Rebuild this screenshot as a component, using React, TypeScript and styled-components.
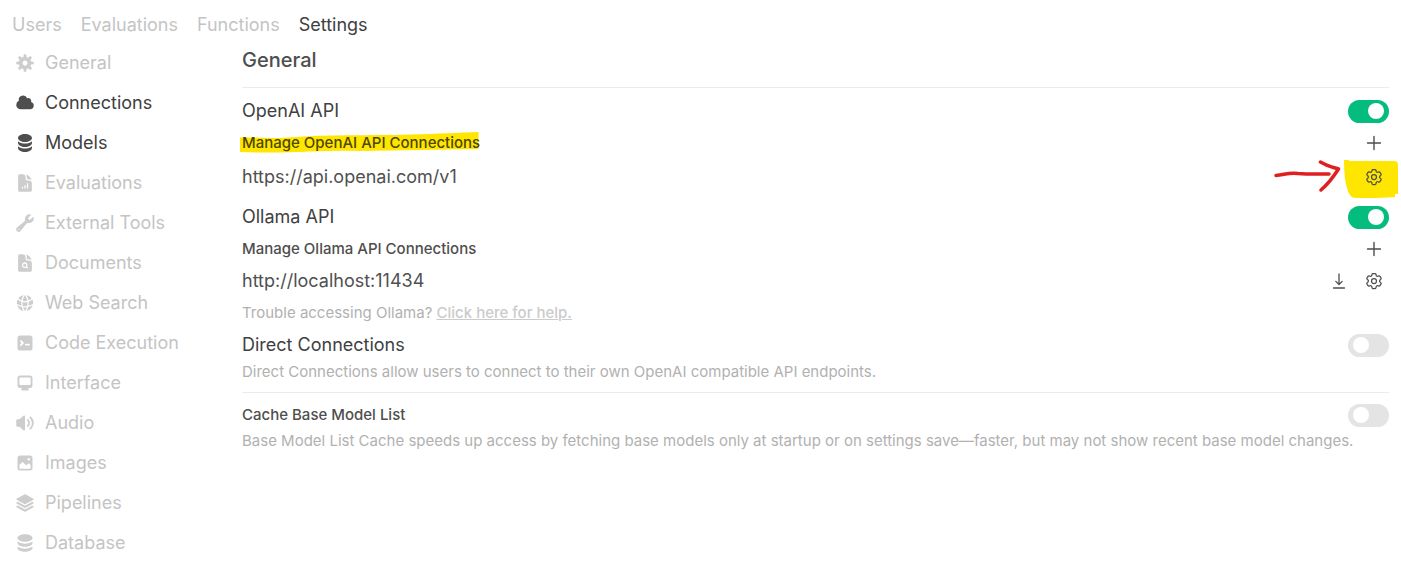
import React from "react";
import styled, { createGlobalStyle } from "styled-components";
import {
  HiDocumentChartBar,
  HiDocumentMagnifyingGlass,
  HiGlobeAlt,
  HiOutlineCog6Tooth,
} from "react-icons/hi2";

const GlobalStyle = createGlobalStyle`
  *, *::before, *::after { box-sizing: border-box; }
  body {
    margin: 0;
    background: #fff;
    color: #4e4e4e;
    font-family: Inter, "Liberation Sans", sans-serif;
  }
`;

const Page = styled.div`
  padding: 8px 12px;
`;

const Tabs = styled.nav`
  display: flex;
  gap: 19px;
  height: 34px;
  align-items: center;
  margin-bottom: 1px;
`;

const NavLink = styled.a<{ $active?: boolean }>`
  color: ${(p) => (p.$active ? "#404040" : "#c4c4c4")};
  font-size: 18px;
  font-weight: 400;
  line-height: 24px;
  text-decoration: none;
  white-space: nowrap;
`;

const Columns = styled.div`
  display: flex;
  align-items: flex-start;
`;

const Sidebar = styled.nav`
  flex: 0 0 230px;
  display: flex;
  flex-direction: column;
`;

const SideLink = styled(NavLink)`
  display: flex;
  align-items: center;
  gap: 10px;
  height: 40px;
  padding-left: 3px;

  svg {
    width: 20px;
    height: 20px;
    flex: none;
    color: ${(p) => (p.$active ? "#4e4e4e" : "#cdcdcd")};
  }
`;

const Main = styled.main`
  flex: 1;
  min-width: 0;
  padding-top: 5px;
`;

const Title = styled.h1`
  margin: 0;
  padding-bottom: 15px;
  font-size: 20px;
  line-height: 24px;
  font-weight: 500;
`;

const Divider = styled.hr`
  height: 1px;
  margin: 0 0 8px;
  border: 0;
  background: #ebebeb;
`;

const Section = styled.section<{ $tight?: boolean }>`
  padding-bottom: ${(p) => (p.$tight ? 5 : 8)}px;
`;

const rowHeights = { short: 28, normal: 30, tall: 34 };

const Row = styled.div<{ $size?: keyof typeof rowHeights }>`
  display: flex;
  align-items: center;
  justify-content: space-between;
  height: ${(p) => rowHeights[p.$size ?? "normal"]}px;
`;

const Label = styled.label<{ $small?: boolean }>`
  color: ${(p) => (p.$small ? "#4e4e4e" : "#404040")};
  font-size: ${(p) => (p.$small ? 15 : 18)}px;
  font-weight: ${(p) => (p.$small ? 500 : 400)};
  line-height: 24px;
`;

const Subheading = styled.h2`
  position: relative;
  margin: 0;
  font-size: 15px;
  font-weight: 500;
  line-height: 24px;

  span {
    position: relative;
    color: #4e4700;
  }
`;

const UrlInput = styled.input`
  flex: 1;
  min-width: 0;
  padding: 0;
  border: 0;
  outline: 0;
  background: none;
  color: #505050;
  font: 400 18px/24px Inter, "Liberation Sans", sans-serif;
`;

const Note = styled.p<{ $spaced?: boolean }>`
  margin: ${(p) => (p.$spaced ? 5 : 0)}px 0 0;
  color: #b1b1b1;
  font-size: 15px;
  line-height: 24px;

  a {
    color: #cbcbcb;
    font-weight: 500;
    text-decoration: underline;
  }
`;

const Actions = styled.div`
  display: flex;
  gap: 5px;
`;

const IconButton = styled.button`
  position: relative;
  display: flex;
  align-items: center;
  justify-content: center;
  width: 30px;
  height: 28px;
  padding: 0;
  border: 0;
  background: none;
  color: #4e4e4e;

  > svg:last-child { position: relative; }
`;

const Toggle = styled.input`
  appearance: none;
  flex: none;
  display: flex;
  align-items: center;
  width: 41px;
  height: 23px;
  margin: 0;
  padding: 0 5px;
  border-radius: 12px;
  background: #e4e4e4;

  &::before {
    content: "";
    width: 16px;
    height: 16px;
    border-radius: 50%;
    background: #fff;
  }

  &:checked {
    justify-content: flex-end;
    background: #04bc7d;
  }
`;

const TextMarker = styled.svg`
  position: absolute;
  left: -2px;
  top: 0;
`;

const ButtonMarker = styled.svg`
  position: absolute;
  right: -11px;
  top: -3px;
`;

const Solid = ({ paths, box = 16 }: { paths: string[]; box?: number }) => (
  <svg viewBox={`0 0 ${box} ${box}`} fill="currentColor" fillRule="evenodd" clipRule="evenodd" aria-hidden="true">
    {paths.map((d) => (
      <path key={d} d={d} />
    ))}
  </svg>
);

const PlusIcon = () => (
  <svg width="20" height="20" viewBox="0 0 20 20" stroke="currentColor" strokeWidth="1.4" strokeLinecap="round" aria-hidden="true">
    <path d="M10 3.5v13M3.5 10h13" />
  </svg>
);

const DownloadIcon = () => (
  <svg width="20" height="20" viewBox="0 0 20 20" fill="none" stroke="currentColor" strokeWidth="1.3" strokeLinecap="round" strokeLinejoin="round" aria-hidden="true">
    <path d="M10 3v10.5M6.8 10.4l3.2 3.1 3.2-3.1M4.5 17h11" />
  </svg>
);

const items: { name: string; active?: boolean; icon: React.ReactNode }[] = [
  {
    name: "General",
    icon: <Solid paths={["M6.955 1.45A.5.5 0 0 1 7.452 1h1.096a.5.5 0 0 1 .497.45l.17 1.699c.484.12.94.312 1.356.562l1.321-1.081a.5.5 0 0 1 .67.033l.774.775a.5.5 0 0 1 .034.67l-1.08 1.32c.25.417.44.873.561 1.357l1.699.17a.5.5 0 0 1 .45.497v1.096a.5.5 0 0 1-.45.497l-1.699.17c-.12.484-.312.94-.562 1.356l1.082 1.322a.5.5 0 0 1-.034.67l-.774.774a.5.5 0 0 1-.67.033l-1.322-1.08c-.416.25-.872.44-1.356.561l-.17 1.699a.5.5 0 0 1-.497.45H7.452a.5.5 0 0 1-.497-.45l-.17-1.699a4.973 4.973 0 0 1-1.356-.562L4.108 13.37a.5.5 0 0 1-.67-.033l-.774-.775a.5.5 0 0 1-.034-.67l1.08-1.32a4.971 4.971 0 0 1-.561-1.357l-1.699-.17A.5.5 0 0 1 1 8.548V7.452a.5.5 0 0 1 .45-.497l1.699-.17c.12-.484.312-.94.562-1.356L2.629 4.107a.5.5 0 0 1 .034-.67l.774-.774a.5.5 0 0 1 .67-.033L5.43 3.71a4.97 4.97 0 0 1 1.356-.561l.17-1.699ZM6 8c0 .538.212 1.026.558 1.385l.057.057a2 2 0 0 0 2.828-2.828l-.058-.056A2 2 0 0 0 6 8Z"]} />,
  },
  {
    name: "Connections",
    active: true,
    icon: <Solid paths={["M1 9.5A3.5 3.5 0 0 0 4.5 13H12a3 3 0 0 0 .917-5.857 2.503 2.503 0 0 0-3.198-3.019 3.5 3.5 0 0 0-6.628 2.171A3.5 3.5 0 0 0 1 9.5Z"]} />,
  },
  {
    name: "Models",
    active: true,
    icon: <Solid box={20} paths={["M10 1c3.866 0 7 1.79 7 4s-3.134 4-7 4-7-1.79-7-4 3.134-4 7-4zm5.694 8.13c.464-.264.91-.583 1.306-.952V10c0 2.21-3.134 4-7 4s-7-1.79-7-4V8.178c.396.37.842.688 1.306.953C5.838 10.006 7.854 10.5 10 10.5s4.162-.494 5.694-1.37zM3 13.179V15c0 2.21 3.134 4 7 4s7-1.79 7-4v-1.822c-.396.37-.842.688-1.306.953-1.532.875-3.548 1.369-5.694 1.369s-4.162-.494-5.694-1.37A7.009 7.009 0 013 13.179z"]} />,
  },
  { name: "Evaluations", icon: <HiDocumentChartBar aria-hidden="true" /> },
  {
    name: "External Tools",
    icon: <Solid paths={["M11.5 8a3.5 3.5 0 0 0 3.362-4.476c-.094-.325-.497-.39-.736-.15L12.099 5.4a.48.48 0 0 1-.653.033 8.554 8.554 0 0 1-.879-.879.48.48 0 0 1 .033-.653l2.027-2.028c.24-.239.175-.642-.15-.736a3.502 3.502 0 0 0-4.476 3.427c.018.99-.133 2.093-.914 2.7l-5.31 4.13a2.015 2.015 0 1 0 2.828 2.827l4.13-5.309c.607-.78 1.71-.932 2.7-.914L11.5 8ZM3 13.5a.5.5 0 1 0 0-1 .5.5 0 0 0 0 1Z"]} />,
  },
  { name: "Documents", icon: <HiDocumentMagnifyingGlass aria-hidden="true" /> },
  { name: "Web Search", icon: <HiGlobeAlt aria-hidden="true" /> },
  {
    name: "Code Execution",
    icon: <Solid paths={["M2 4a2 2 0 0 1 2-2h8a2 2 0 0 1 2 2v8a2 2 0 0 1-2 2H4a2 2 0 0 1-2-2V4Zm2.22 1.97a.75.75 0 0 0 0 1.06l.97.97-.97.97a.75.75 0 1 0 1.06 1.06l1.5-1.5a.75.75 0 0 0 0-1.06l-1.5-1.5a.75.75 0 0 0-1.06 0ZM8.75 8.5a.75.75 0 0 0 0 1.5h2.5a.75.75 0 0 0 0-1.5h-2.5Z"]} />,
  },
  {
    name: "Interface",
    icon: <Solid paths={["M2 4.25A2.25 2.25 0 0 1 4.25 2h7.5A2.25 2.25 0 0 1 14 4.25v5.5A2.25 2.25 0 0 1 11.75 12h-1.312c.1.128.21.248.328.36a.75.75 0 0 1 .234.545v.345a.75.75 0 0 1-.75.75h-4.5a.75.75 0 0 1-.75-.75v-.345a.75.75 0 0 1 .234-.545c.118-.111.228-.232.328-.36H4.25A2.25 2.25 0 0 1 2 9.75v-5.5Zm2.25-.75a.75.75 0 0 0-.75.75v4.5c0 .414.336.75.75.75h7.5a.75.75 0 0 0 .75-.75v-4.5a.75.75 0 0 0-.75-.75h-7.5Z"]} />,
  },
  {
    name: "Audio",
    icon: <Solid paths={["M7.557 2.066A.75.75 0 0 1 8 2.75v10.5a.75.75 0 0 1-1.248.56L3.59 11H2a1 1 0 0 1-1-1V6a1 1 0 0 1 1-1h1.59l3.162-2.81a.75.75 0 0 1 .805-.124ZM12.95 3.05a.75.75 0 1 0-1.06 1.06 5.5 5.5 0 0 1 0 7.78.75.75 0 1 0 1.06 1.06 7 7 0 0 0 0-9.9Z", "M10.828 5.172a.75.75 0 1 0-1.06 1.06 2.5 2.5 0 0 1 0 3.536.75.75 0 1 0 1.06 1.06 4 4 0 0 0 0-5.656Z"]} />,
  },
  {
    name: "Images",
    icon: <Solid paths={["M2 4a2 2 0 0 1 2-2h8a2 2 0 0 1 2 2v8a2 2 0 0 1-2 2H4a2 2 0 0 1-2-2V4Zm10.5 5.707a.5.5 0 0 0-.146-.353l-1-1a.5.5 0 0 0-.708 0L9.354 9.646a.5.5 0 0 1-.708 0L6.354 7.354a.5.5 0 0 0-.708 0l-2 2a.5.5 0 0 0-.146.353V12a.5.5 0 0 0 .5.5h8a.5.5 0 0 0 .5-.5V9.707ZM12 5a1 1 0 1 1-2 0 1 1 0 0 1 2 0Z"]} />,
  },
  {
    name: "Pipelines",
    icon: <Solid box={24} paths={["M11.644 1.59a.75.75 0 0 1 .712 0l9.75 5.25a.75.75 0 0 1 0 1.32l-9.75 5.25a.75.75 0 0 1-.712 0l-9.75-5.25a.75.75 0 0 1 0-1.32l9.75-5.25Z", "m3.265 10.602 7.668 4.129a2.25 2.25 0 0 0 2.134 0l7.668-4.13 1.37.739a.75.75 0 0 1 0 1.32l-9.75 5.25a.75.75 0 0 1-.71 0l-9.75-5.25a.75.75 0 0 1 0-1.32l1.37-.738Z", "m10.933 19.231-7.668-4.13-1.37.739a.75.75 0 0 0 0 1.32l9.75 5.25c.221.12.489.12.71 0l9.75-5.25a.75.75 0 0 0 0-1.32l-1.37-.738-7.668 4.13a2.25 2.25 0 0 1-2.134-.001Z"]} />,
  },
  {
    name: "Database",
    icon: <Solid paths={["M8 7c3.314 0 6-1.343 6-3s-2.686-3-6-3-6 1.343-6 3 2.686 3 6 3Z", "M8 8.5c1.84 0 3.579-.37 4.914-1.037A6.33 6.33 0 0 0 14 6.78V8c0 1.657-2.686 3-6 3S2 9.657 2 8V6.78c.346.273.72.5 1.087.683C4.42 8.131 6.16 8.5 8 8.5Z", "M8 12.5c1.84 0 3.579-.37 4.914-1.037.366-.183.74-.41 1.086-.684V12c0 1.657-2.686 3-6 3s-6-1.343-6-3v-1.22c.346.273.72.5 1.087.683C4.42 12.131 6.16 12.5 8 12.5Z"]} />,
  },
];

export default function App() {
  return (
    <Page>
      <GlobalStyle />
      <Tabs aria-label="Admin">
        {["Users", "Evaluations", "Functions", "Settings"].map((tab) => (
          <NavLink key={tab} href="#" $active={tab === "Settings"}>
            {tab}
          </NavLink>
        ))}
      </Tabs>
      <Columns>
        <Sidebar aria-label="Settings">
          {items.map((item) => (
            <SideLink key={item.name} href="#" $active={item.active}>
              {item.icon}
              {item.name}
            </SideLink>
          ))}
        </Sidebar>
        <Main>
          <Title>General</Title>
          <Divider />
          <Section>
            <Row>
              <Label htmlFor="openai">OpenAI API</Label>
              <Toggle id="openai" type="checkbox" defaultChecked />
            </Row>
            <Row $size="tall">
              <Subheading>
                <TextMarker width="240" height="24" viewBox="0 0 240 24" aria-hidden="true">
                  <path d="M0 6.5C18 6 30 8 48 6.500C90 3 130 5 170 3.500C200 3 220 1.500 238.500 1V18C200 19 160 19 120 20C80 19 50 23 0 21Z" fill="#ffe600" />
                </TextMarker>
                <span>Manage OpenAI API Connections</span>
              </Subheading>
              <IconButton aria-label="Add OpenAI connection">
                <PlusIcon />
              </IconButton>
            </Row>
            <Row $size="tall">
              <UrlInput aria-label="OpenAI API URL" defaultValue="https://api.openai.com/v1" />
              <IconButton aria-label="Configure OpenAI connection">
                <ButtonMarker width="128" height="40" viewBox="0 0 128 40" aria-hidden="true">
                  <path d="M72 0h5v1h45q4 0 4 4v29h-3v3q-14 1-24 1H84q-7 0-9-10Q72 19 72 0Z" fill="#ffe600" />
                  <path d="M4 15.500C12 15 17 12 26 13.500C38 14.500 48 14 57 14M48.500 2C55 6 62 7.500 66.500 9C62 16 56 24 49 30" fill="none" stroke="#e02020" strokeWidth="3.5" strokeLinecap="round" strokeLinejoin="round" />
                </ButtonMarker>
                <HiOutlineCog6Tooth size={20} aria-hidden="true" />
              </IconButton>
            </Row>
          </Section>
          <Section $tight>
            <Row>
              <Label htmlFor="ollama">Ollama API</Label>
              <Toggle id="ollama" type="checkbox" defaultChecked />
            </Row>
            <Row $size="tall">
              <Subheading>Manage Ollama API Connections</Subheading>
              <IconButton aria-label="Add Ollama connection">
                <PlusIcon />
              </IconButton>
            </Row>
            <Row>
              <UrlInput aria-label="Ollama API URL" defaultValue="http://localhost:11434" />
              <Actions>
                <IconButton aria-label="Manage Ollama models">
                  <DownloadIcon />
                </IconButton>
                <IconButton aria-label="Configure Ollama connection">
                  <HiOutlineCog6Tooth size={20} aria-hidden="true" />
                </IconButton>
              </Actions>
            </Row>
            <Note $spaced>
              Trouble accessing Ollama? <a href="#">Click here for help.</a>
            </Note>
          </Section>
          <Section>
            <Row>
              <Label htmlFor="direct">Direct Connections</Label>
              <Toggle id="direct" type="checkbox" />
            </Row>
            <Note>
              Direct Connections allow users to connect to their own OpenAI compatible API endpoints.
            </Note>
          </Section>
          <Divider />
          <Row $size="short">
            <Label $small htmlFor="cache">Cache Base Model List</Label>
            <Toggle id="cache" type="checkbox" />
          </Row>
          <Note>
            Base Model List Cache speeds up access by fetching base models only at startup or on settings save—faster, but may not show recent base model changes.
          </Note>
        </Main>
      </Columns>
    </Page>
  );
}
